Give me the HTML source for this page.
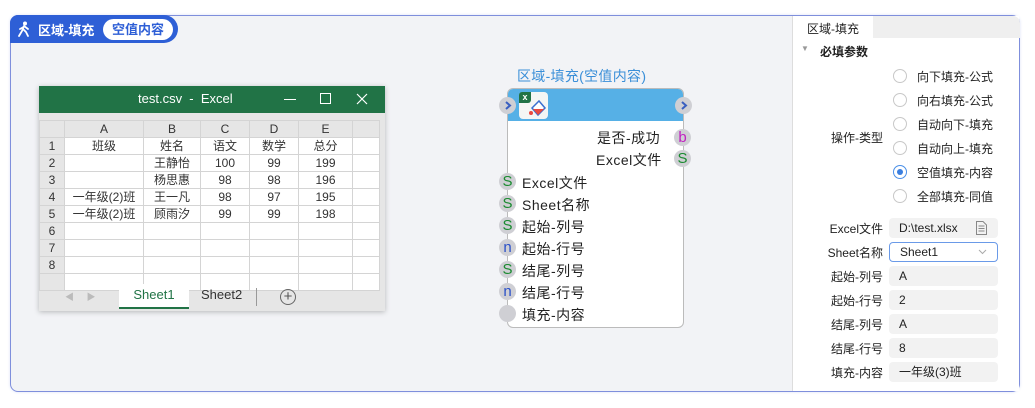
<!DOCTYPE html>
<html><head><meta charset="utf-8"><style>
*{margin:0;padding:0;box-sizing:border-box}
body{width:1035px;height:408px;background:#fff;position:relative;overflow:hidden;font-family:"Liberation Sans","Noto Sans CJK SC",sans-serif;font-size:12px;color:#222}
.a{position:absolute}
.frame{left:10px;top:15px;width:1010px;height:377px;border:1px solid #7f8fdc;border-radius:8px;background:#f2f3f6;overflow:hidden;box-shadow:0 0 3px #dde3f8}
.tag{left:10px;top:15px;width:168px;height:28px;background:#2e5fd6;border-radius:8px 14px 14px 0;color:#fff;font-weight:bold;font-size:13px}
.pill{left:103px;top:19px;width:70px;height:21px;background:#fff;border-radius:11px;color:#2e5fd6;font-size:13px;text-align:center;line-height:21px;font-weight:bold}
.xl{left:39px;top:86px;width:346px;height:225px;background:#e6e6e6;box-shadow:0 1px 5px rgba(0,0,0,.25)}
.tb{left:0;top:0;width:346px;height:27px;background:#217346;color:#fff;font-size:13px}
table{border-collapse:collapse;position:absolute;left:0;top:34px;font-size:12px}
td{border:1px solid #d4d4d4;height:17px;text-align:center;padding:0;line-height:15px;background:#fff;color:#333}
tr.h td,td.rh{background:#e6e6e6;color:#333}
.node{left:507px;top:88px;width:177px;height:240px;background:#fff;border:1.5px solid #bbb;border-radius:6px;overflow:hidden}
.port{width:17px;height:17px;border-radius:50%;background:#cfcfd4;text-align:center;line-height:17px;font-size:15px}
.nl{font-size:14px;color:#222;letter-spacing:.5px}
.rp{left:792px;top:16px;width:227px;height:375px;background:#fff;border-left:1px solid #ddd}
.lbl{font-size:12px;color:#222;text-align:right;width:90px}
.inp{left:889px;width:109px;height:20px;background:#f2f2f2;border-radius:4px;font-size:12px;line-height:20px;padding-left:10px;color:#222}
.rad{left:893px;width:14px;height:14px;border:1px solid #c8c8c8;border-radius:50%;background:#fff}
.rt{left:917px;font-size:12px;color:#222}
</style></head><body>
<div class="a frame"></div>
<div class="a tag">
 <svg class="a" style="left:7px;top:6px" width="14" height="16" viewBox="0 0 14 16"><circle cx="8" cy="2.5" r="2" fill="#fff"/><path d="M7 5 L5 10 L2 15 M6 8 L9 11 L11 15 M7 5 L11 8 M6.5 6 L3 8" stroke="#fff" stroke-width="1.8" fill="none" stroke-linecap="round"/></svg>
 <span class="a" style="left:28px;top:5px">区域-填充</span>
</div>
<div class="a pill">空值内容</div>

<div class="a xl">
 <div class="a tb"><span class="a" style="left:99px;top:5px">test.csv&nbsp; - &nbsp;Excel</span>
  <span class="a" style="left:245px;top:13px;width:12px;height:1px;background:#fff"></span>
  <span class="a" style="left:281px;top:7px;width:11px;height:11px;border:1px solid #fff"></span>
  <svg class="a" style="left:317px;top:7px" width="12" height="12"><path d="M1 1L11 11M11 1L1 11" stroke="#fff" stroke-width="1.2"/></svg></div>
 <table>
  <tr class="h"><td style="width:25px"></td><td style="width:79px">A</td><td style="width:57px">B</td><td style="width:49px">C</td><td style="width:49px">D</td><td style="width:54px">E</td><td style="width:27px"></td></tr>
  <tr><td class="rh">1</td><td>班级</td><td>姓名</td><td>语文</td><td>数学</td><td>总分</td><td></td></tr>
  <tr><td class="rh">2</td><td></td><td>王静怡</td><td>100</td><td>99</td><td>199</td><td></td></tr>
  <tr><td class="rh">3</td><td></td><td>杨思惠</td><td>98</td><td>98</td><td>196</td><td></td></tr>
  <tr><td class="rh">4</td><td>一年级(2)班</td><td>王一凡</td><td>98</td><td>97</td><td>195</td><td></td></tr>
  <tr><td class="rh">5</td><td>一年级(2)班</td><td>顾雨汐</td><td>99</td><td>99</td><td>198</td><td></td></tr>
  <tr><td class="rh">6</td><td></td><td></td><td></td><td></td><td></td><td></td></tr>
  <tr><td class="rh">7</td><td></td><td></td><td></td><td></td><td></td><td></td></tr>
  <tr><td class="rh">8</td><td></td><td></td><td></td><td></td><td></td><td></td></tr>
  <tr><td class="rh" style="height:12px"></td><td></td><td></td><td></td><td></td><td></td><td></td></tr>
 </table>
 <span class="a" style="left:26px;top:204px;color:#bbb;font-size:9px">◀ &nbsp;&nbsp;&nbsp; ▶</span>
 <div class="a" style="left:80px;top:198px;width:70px;height:25px;background:#fff;border-bottom:2px solid #217346;color:#217346;font-size:13px;text-align:center;line-height:22px">Sheet1</div>
 <div class="a" style="left:162px;top:201px;font-size:13px;color:#333">Sheet2</div>
 <div class="a" style="left:217px;top:202px;width:1px;height:18px;background:#999"></div>
 <div class="a" style="left:241px;top:203px;width:16px;height:16px;border:1.3px solid #666;border-radius:50%;text-align:center;line-height:13px;font-size:15px;color:#555">+</div>
</div>

<div class="a" style="left:517px;top:66px;font-size:14px;color:#3a8fd8;letter-spacing:.3px">区域-填充(空值内容)</div>
<div class="a node">
 <div class="a" style="left:0;top:0;width:177px;height:32px;background:#56b0e6"></div>
 <div class="a" style="left:11px;top:3px;width:29px;height:27px;background:#f4f6f4;border-radius:4px"></div>
 <div class="a" style="left:11px;top:3px;width:12px;height:11px;background:#217346;border-radius:3px 0 3px 0;color:#fff;font-size:9px;text-align:center;line-height:11px;font-weight:bold">x</div>
 <svg class="a" style="left:20px;top:9px" width="20" height="20"><path d="M4 10 L11 3 L17 10 L10 17 Z" fill="#fff" stroke="#3a6fd0" stroke-width="1.5"/><path d="M5 11 L16 11 L10 17 Z" fill="#e8493f"/><circle cx="3" cy="15" r="2" fill="#e8493f"/></svg>
 <span class="a nl" style="left:89px;top:39px">是否-成功</span>
 <span class="a nl" style="left:88px;top:61px">Excel文件</span>
 <span class="a nl" style="left:14px;top:84px">Excel文件</span>
 <span class="a nl" style="left:14px;top:106px">Sheet名称</span>
 <span class="a nl" style="left:14px;top:128px">起始-列号</span>
 <span class="a nl" style="left:14px;top:150px">起始-行号</span>
 <span class="a nl" style="left:14px;top:172px">结尾-列号</span>
 <span class="a nl" style="left:14px;top:194px">结尾-行号</span>
 <span class="a nl" style="left:14px;top:216px">填充-内容</span>
</div>
<div class="a port" style="left:499px;top:97px"><svg class="a" style="left:5px;top:4px" width="8" height="9"><path d="M2 1L6 4.5L2 8" stroke="#3a5fc0" stroke-width="2" fill="none"/></svg></div>
<div class="a port" style="left:675px;top:97px"><svg class="a" style="left:5px;top:4px" width="8" height="9"><path d="M2 1L6 4.5L2 8" stroke="#3a5fc0" stroke-width="2" fill="none"/></svg></div>
<div class="a port" style="left:674px;top:129px;color:#c020c0">b</div>
<div class="a port" style="left:674px;top:150px;color:#1a8a30">S</div>
<div class="a port" style="left:499px;top:173px;color:#1a8a30">S</div>
<div class="a port" style="left:499px;top:195px;color:#1a8a30">S</div>
<div class="a port" style="left:499px;top:217px;color:#1a8a30">S</div>
<div class="a port" style="left:499px;top:239px;color:#2a50c8">n</div>
<div class="a port" style="left:499px;top:261px;color:#1a8a30">S</div>
<div class="a port" style="left:499px;top:283px;color:#2a50c8">n</div>
<div class="a port" style="left:499px;top:305px"></div>

<div class="a rp">
 <div class="a" style="left:80px;top:0;width:147px;height:22px;background:#efefef;border-top-right-radius:7px"></div>
 <span class="a" style="left:14px;top:4px">区域-填充</span>
 <span class="a" style="left:8px;top:28px;color:#999;font-size:8px">▼</span>
 <span class="a" style="left:27px;top:27px;font-weight:bold">必填参数</span>
</div>
<div class="a rad" style="top:69px"></div><span class="a rt" style="top:68px">向下填充-公式</span>
<div class="a rad" style="top:93px"></div><span class="a rt" style="top:92px">向右填充-公式</span>
<div class="a rad" style="top:117px"></div><span class="a rt" style="top:116px">自动向下-填充</span>
<div class="a rad" style="top:141px"></div><span class="a rt" style="top:140px">自动向上-填充</span>
<div class="a rad" style="top:165px;border-color:#4a8fe8"><div class="a" style="left:3px;top:3px;width:6px;height:6px;border-radius:50%;background:#3a7fe0"></div></div><span class="a rt" style="top:164px">空值填充-内容</span>
<div class="a rad" style="top:189px"></div><span class="a rt" style="top:188px">全部填充-同值</span>
<span class="a lbl" style="left:793px;top:129px">操作-类型</span>

<span class="a lbl" style="left:793px;top:220px">Excel文件</span><div class="a inp" style="top:218px">D:\test.xlsx<svg class="a" style="left:87px;top:3px" width="11" height="14"><path d="M.5 .5 H7 L10.5 4 V13.5 H.5 Z M2.5 5 H8.5 M2.5 7.5 H8.5 M2.5 10 H8.5" fill="none" stroke="#888"/></svg></div>
<span class="a lbl" style="left:793px;top:244px">Sheet名称</span><div class="a inp" style="top:242px;background:#fff;border:1px solid #6a9ae8;line-height:18px">Sheet1<svg class="a" style="left:88px;top:6px" width="9" height="6"><path d="M1 1L4.5 4.5L8 1" stroke="#aaa" fill="none"/></svg></div>
<span class="a lbl" style="left:793px;top:268px">起始-列号</span><div class="a inp" style="top:266px">A</div>
<span class="a lbl" style="left:793px;top:292px">起始-行号</span><div class="a inp" style="top:290px">2</div>
<span class="a lbl" style="left:793px;top:316px">结尾-列号</span><div class="a inp" style="top:314px">A</div>
<span class="a lbl" style="left:793px;top:340px">结尾-行号</span><div class="a inp" style="top:338px">8</div>
<span class="a lbl" style="left:793px;top:364px">填充-内容</span><div class="a inp" style="top:362px">一年级(3)班</div>
</body></html>
